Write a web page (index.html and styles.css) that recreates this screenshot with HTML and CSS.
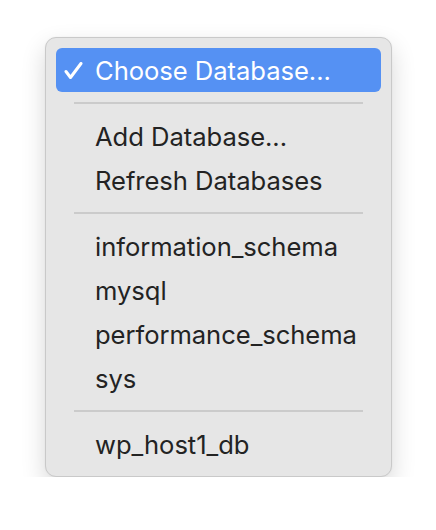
FILE: index.html
```html
<!DOCTYPE html>
<html>
<head>
<meta charset="utf-8">
<link rel="stylesheet" href="styles.css">
</head>
<body>
<div class="menu">
  <div class="item selected">
    <svg class="check" width="20" height="18" viewBox="0 0 20 18"><path d="M2 9.5 L6.5 15.5 L17 1.5" fill="none" stroke="#fff" stroke-width="3" stroke-linecap="round" stroke-linejoin="round"/></svg>
    <span>Choose Database...</span>
  </div>
  <div class="sep"></div>
  <div class="item"><span>Add Database...</span></div>
  <div class="item"><span>Refresh Databases</span></div>
  <div class="sep"></div>
  <div class="item"><span>information_schema</span></div>
  <div class="item"><span>mysql</span></div>
  <div class="item"><span>performance_schema</span></div>
  <div class="item"><span>sys</span></div>
  <div class="sep"></div>
  <div class="item"><span>wp_host1_db</span></div>
</div>
</body>
</html>
```
FILE: styles.css
```css
html, body {
  margin: 0;
  padding: 0;
  background: #ffffff;
}
body {
  padding: 37px 0 0 45px;
  font-family: Inter, "Liberation Sans", sans-serif;
}
.menu {
  width: 325px;
  padding: 10px;
  background: #e6e6e6;
  border: 1px solid #c9c9c9;
  border-radius: 11px;
  box-shadow: 0 10px 24px rgba(0, 0, 0, 0.16), 0 0 2px rgba(0,0,0,0.05);
  display: flex;
  flex-direction: column;
}
.item {
  height: 44px;
  display: flex;
  align-items: center;
  position: relative;
  padding-left: 39px;
  font-size: 25.6px;
  color: #232323;
  border-radius: 6px;
  letter-spacing: -0.05px;
}
.selected {
  background: #5591f3;
  color: #ffffff;
}
.check {
  position: absolute;
  left: 8px;
  top: 14px;
}
.sep {
  height: 2px;
  margin: 10px 18px;
  background: #cbcbcb;
}
```
